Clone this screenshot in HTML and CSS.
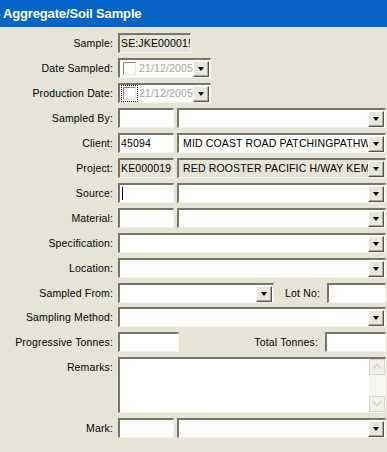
FILE: index.html
```html
<!DOCTYPE html>
<html lang="en">
<head>
  <meta charset="UTF-8">
  <title>Aggregate/Soil Sample</title>
  <link rel="stylesheet" href="styles.css">
</head>
<body>
  <div class="titlebar">Aggregate/Soil Sample</div>

  <div class="form">
    <div class="row">
      <label>Sample:</label>
      <div class="field"><div class="box ro w-code">SE:JKE00001!</div></div>
    </div>
    <div class="row">
      <label>Date Sampled:</label>
      <div class="field">
        <div class="box date w-date">
          <span class="check"></span><span class="txt dim">21/12/2005</span><span class="btn"></span>
        </div>
      </div>
    </div>
    <div class="row gap1">
      <label>Production Date:</label>
      <div class="field">
        <div class="box date w-date">
          <span class="check focus"></span><span class="txt dim">21/12/2005</span><span class="btn"></span>
        </div>
      </div>
    </div>
    <div class="row gap1">
      <label>Sampled By:</label>
      <div class="field pair">
        <div class="box w-short"></div>
        <div class="box sel grow"><span class="txt"></span><span class="btn"></span></div>
      </div>
    </div>
    <div class="row">
      <label>Client:</label>
      <div class="field pair">
        <div class="box w-short">45094</div>
        <div class="box sel grow"><span class="txt">MID COAST ROAD PATCHINGPATHWAY</span><span class="btn"></span></div>
      </div>
    </div>
    <div class="row">
      <label>Project:</label>
      <div class="field pair">
        <div class="box ro w-short">KE000019</div>
        <div class="box sel ro grow"><span class="txt">RED ROOSTER PACIFIC H/WAY KEMPSEY</span><span class="btn"></span></div>
      </div>
    </div>

    <div class="row gap1">
      <label>Source:</label>
      <div class="field pair">
        <div class="box w-short"><span class="caret"></span></div>
        <div class="box sel grow"><span class="txt"></span><span class="btn"></span></div>
      </div>
    </div>
    <div class="row">
      <label>Material:</label>
      <div class="field pair">
        <div class="box w-short"></div>
        <div class="box sel grow"><span class="txt"></span><span class="btn"></span></div>
      </div>
    </div>
    <div class="row">
      <label>Specification:</label>
      <div class="field">
        <div class="box sel grow"><span class="txt"></span><span class="btn"></span></div>
      </div>
    </div>

    <div class="row gap1">
      <label>Location:</label>
      <div class="field">
        <div class="box sel grow"><span class="txt"></span><span class="btn"></span></div>
      </div>
    </div>
    <div class="row">
      <label>Sampled From:</label>
      <div class="field pair">
        <div class="box sel w-from"><span class="txt"></span><span class="btn"></span></div>
        <span class="inline-label">Lot No:</span>
        <div class="box w-lot"></div>
      </div>
    </div>
    <div class="row tight">
      <label>Sampling Method:</label>
      <div class="field">
        <div class="box sel grow"><span class="txt"></span><span class="btn"></span></div>
      </div>
    </div>
    <div class="row">
      <label>Progressive Tonnes:</label>
      <div class="field pair">
        <div class="box w-tonnes"></div>
        <span class="inline-label">Total Tonnes:</span>
        <div class="box w-tonnes"></div>
      </div>
    </div>
    <div class="row gap1 tall">
      <label>Remarks:</label>
      <div class="field">
        <div class="box memo grow">
          <div class="scroll">
            <span class="arrow up"></span>
            <span class="track"></span>
            <span class="arrow down"></span>
          </div>
        </div>
      </div>
    </div>
    <div class="row gap1">
      <label>Mark:</label>
      <div class="field pair">
        <div class="box w-short"></div>
        <div class="box sel grow"><span class="txt"></span><span class="btn"></span></div>
      </div>
    </div>
  </div>
</body>
</html>
```

FILE: styles.css
```css
body { margin: 0; background: #e5e4d7; font-family: "Liberation Sans", Arial, sans-serif; font-size: 10.5px; letter-spacing: 0.15px; color: #000; }
.titlebar { background: #0764c8; color: #fff; font-weight: bold; font-size: 13px; letter-spacing: -0.15px; height: 27px; line-height: 28px; padding-left: 3px; }

.form { padding-top: 6px; padding-right: 1px; }
.row { display: grid; grid-template-columns: 113px minmax(0, 1fr); column-gap: 5px; height: 20px; margin-bottom: 5px; align-items: center; }
.row.gap1 { margin-top: 1px; }
.row.tight { margin-top: -1px; }
.row.tall { height: 56px; align-items: start; }
.row.tall label { padding-top: 4px; }
.row label { text-align: right; white-space: nowrap; }

.field { display: flex; align-items: center; height: 100%; min-width: 0; }
.pair { gap: 3px; }
.inline-label { flex: 1; text-align: right; padding-right: 4px; white-space: nowrap; }

.box { box-sizing: border-box; height: 20px; min-width: 0; background: #fff; border-top: 2px solid #777566; border-left: 2px solid #777566; border-right: 1px solid #f4f3ec; border-bottom: 1px solid #f4f3ec; padding-left: 1px; line-height: 17px; white-space: nowrap; overflow: hidden; position: relative; }
.box.ro { background: #e5e4d7; }
.grow { flex: 1; }
.w-code { width: 73px; }
.w-short { width: 56px; }
.w-date { width: 93px; }
.w-from { width: 156px; }
.w-lot { width: 59px; }
.w-tonnes { width: 61px; }

.sel, .date { display: flex; align-items: center; padding-right: 1px; }
.sel .txt { flex: 1; min-width: 0; overflow: hidden; padding-left: 3px; }
.date .txt { flex: 1; min-width: 0; overflow: hidden; }
.dim { color: #a5a59a; }

.btn { box-sizing: border-box; width: 16px; height: 16px; background: #e8e7dc; border-top: 1px solid #fff; border-left: 1px solid #fff; border-right: 1px solid #55544a; border-bottom: 1px solid #55544a; box-shadow: inset -1px -1px 0 #aca899; position: relative; flex: none; }
.btn::after { content: ""; position: absolute; left: 4px; top: 5px; border-left: 3px solid transparent; border-right: 3px solid transparent; border-top: 4px solid #000; }

.check { box-sizing: border-box; width: 13px; height: 13px; margin: 0 3px 0 2px; border-top: 1px solid #8c8a7d; border-left: 1px solid #8c8a7d; border-right: 1px solid #e8e7dc; border-bottom: 1px solid #e8e7dc; background: #fff; flex: none; }
.check.focus { outline: 1px dotted #000; outline-offset: 1px; }

.caret { position: absolute; left: 2px; top: 2px; width: 1px; height: 13px; background: #000; }

.memo { height: 56px; }
.scroll { position: absolute; right: 0; top: 0; bottom: 0; width: 16px; display: flex; flex-direction: column; background: #f7f6f1; }
.scroll .track { flex: 1; }
.arrow { box-sizing: border-box; height: 16px; background: #f1f0ea; border: 1px solid #d9d8cf; position: relative; }
.arrow::after { content: ""; position: absolute; left: 4px; width: 5px; height: 5px; border-left: 1px solid #c8c7be; border-top: 1px solid #c8c7be; }
.arrow.up::after { top: 5px; transform: rotate(45deg); }
.arrow.down::after { top: 2px; transform: rotate(225deg); }
```
